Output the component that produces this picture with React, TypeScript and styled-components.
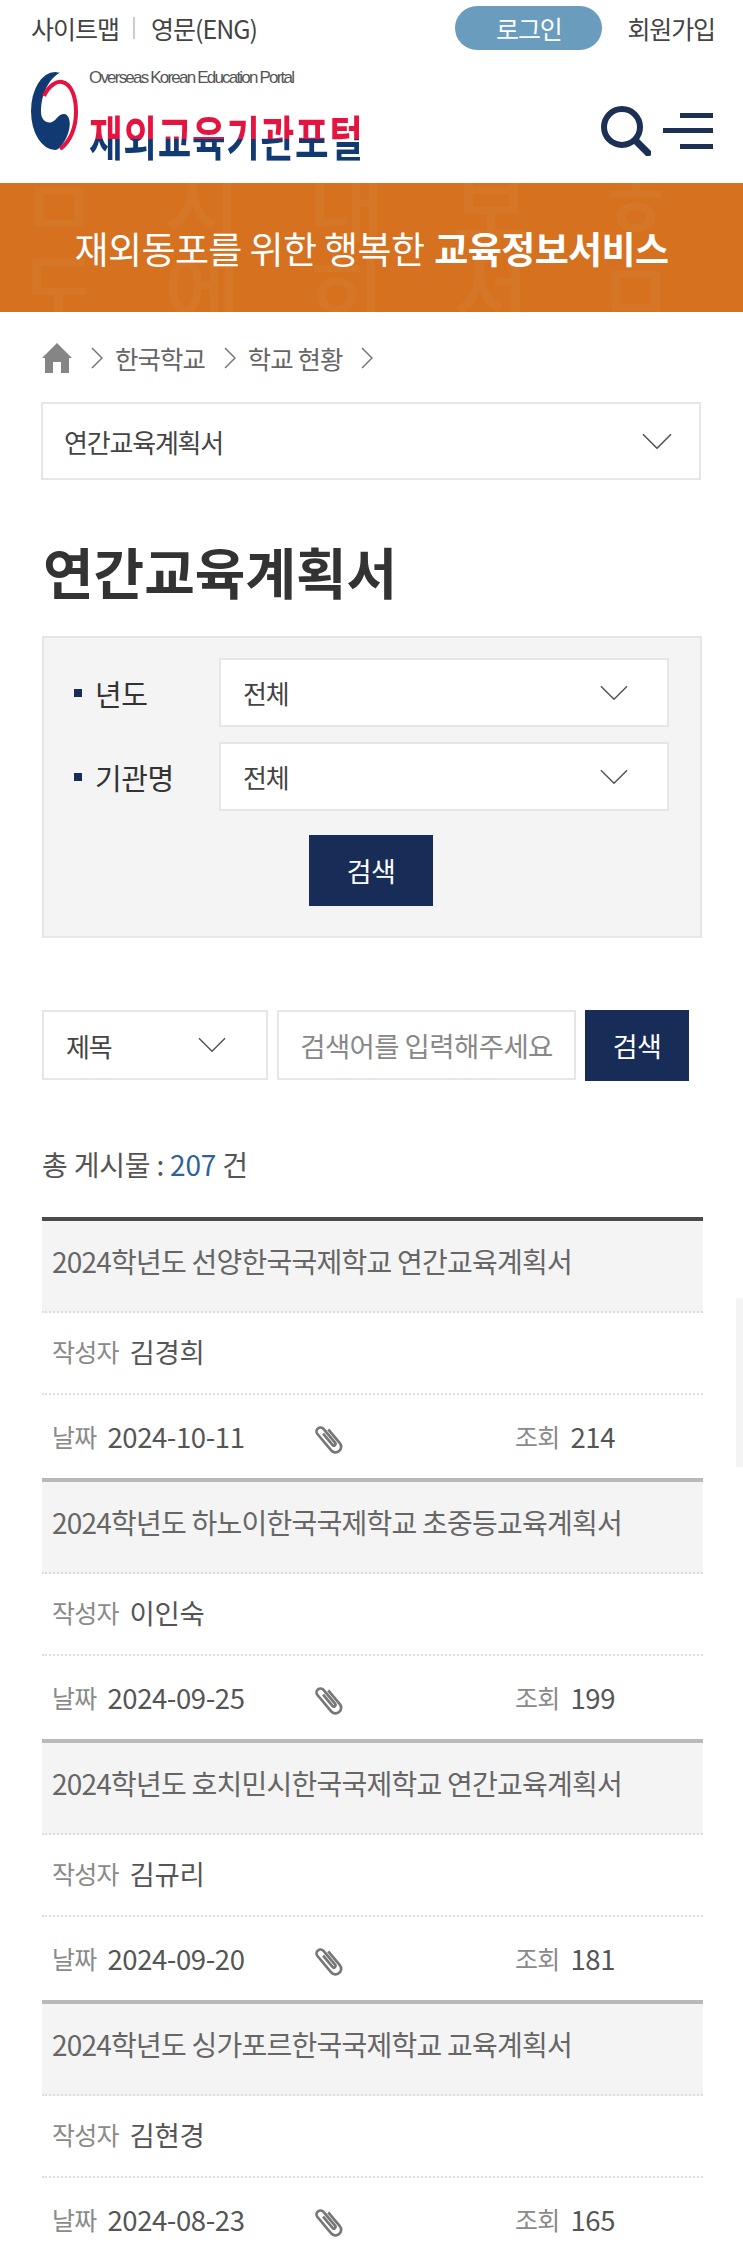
import styled, { createGlobalStyle } from "styled-components";

const GlobalStyle = createGlobalStyle`
  html, body {
    margin: 0;
    padding: 0;
    background: #fff;
    font-family: "Noto Sans CJK KR", "Noto Sans", sans-serif;
    color: #333;
  }
  * { box-sizing: border-box; }
`;

const Page = styled.div`
  width: 743px;
  height: 2264px;
  overflow: hidden;
  position: relative;
`;

const TopBar = styled.div`
  height: 56px;
  padding: 6px 28px 0 31px;
  display: flex;
  align-items: flex-start;
  justify-content: space-between;
`;

const UtilLinks = styled.div`
  display: flex;
  align-items: center;
  height: 44px;
  font-size: 25px;
  letter-spacing: -1px;
  color: #444;
`;

const Divider = styled.span`
  width: 2px;
  height: 22px;
  background: #ccc;
  margin: 0 16px 0 14px;
`;

const AuthLinks = styled.div`
  display: flex;
  align-items: center;
  gap: 25px;
  font-size: 25px;
  letter-spacing: -1.1px;
  color: #444;
`;

const LoginPill = styled.div`
  width: 147px;
  height: 44px;
  border-radius: 22px;
  background: #6a9cbe;
  color: #fff;
  display: flex;
  align-items: center;
  justify-content: center;
`;

const HeaderRow = styled.div`
  height: 127px;
  padding: 11px 30px 0 31px;
  display: flex;
  justify-content: space-between;
`;

const Logo = styled.div`
  display: flex;
  gap: 10px;
`;

const LogoText = styled.div`
  display: flex;
  flex-direction: column;
`;

const LogoCaption = styled.div`
  font-family: "Liberation Sans", sans-serif;
  font-size: 17px;
  line-height: 22px;
  letter-spacing: -1.8px;
  color: #555;
  white-space: nowrap;
`;

const LogoTitle = styled.div`
  font-size: 36.5px;
  line-height: 36px;
  font-weight: 700;
  letter-spacing: 0.75px;
  white-space: nowrap;
  transform: scaleY(1.35);
  transform-origin: top left;
  margin-top: 23px;
  background: linear-gradient(#e4133f 0 55%, #123a72 55% 100%);
  -webkit-background-clip: text;
  background-clip: text;
  color: transparent;
`;

const HeaderIcons = styled.div`
  display: flex;
  align-items: center;
  gap: 12px;
  height: 100px;
  padding-top: 28px;
`;

const Banner = styled.div`
  position: relative;
  height: 129px;
  background: #d5711f;
  overflow: hidden;
  display: flex;
  align-items: center;
  justify-content: center;
  font-size: 37px;
  letter-spacing: -0.6px;
  color: #fff;
  strong { font-weight: 700; margin-left: 10px; }
`;

const BannerTexture = styled.div`
  position: absolute;
  top: -22px;
  left: 20px;
  right: 20px;
  font-size: 84px;
  line-height: 84px;
  white-space: nowrap;
  letter-spacing: 24px;
  font-weight: 500;
  color: rgba(255, 255, 255, 0.045);
`;

const BannerLine = styled.span`
  position: relative;
`;

const Breadcrumb = styled.nav`
  height: 90px;
  padding: 1px 0 0 42px;
  display: flex;
  align-items: center;
  font-size: 25.5px;
  letter-spacing: -1px;
  color: #666;
`;

const Crumb = styled.span`
  display: flex;
  margin: 0 12px 0 19px;
`;

const Content = styled.div`
  padding: 0 41px;
`;

const Select = styled.div<{ $w?: string; $h: number; $pad: number; $right: number; $size: number }>`
  width: ${(p) => p.$w || "100%"};
  height: ${(p) => p.$h}px;
  background: #fff;
  border: 2px solid #e6e6e8;
  padding: 0 ${(p) => p.$right}px 0 ${(p) => p.$pad}px;
  display: flex;
  align-items: center;
  justify-content: space-between;
  font-size: ${(p) => p.$size}px;
  letter-spacing: -1.2px;
  color: #444;
  flex-shrink: 0;
`;

const Title = styled.h1`
  margin: 54px 0 30px 2px;
  font-size: 55px;
  line-height: 72px;
  font-weight: 700;
  letter-spacing: 0;
  color: #333;
`;

const FilterPanel = styled.div`
  margin-left: 1px;
  width: 660px;
  height: 302px;
  background: #f4f4f4;
  border: 2px solid #e6e6e6;
  padding: 20px 31px 0 30px;
`;

const FilterRow = styled.div`
  display: flex;
  align-items: center;
  margin-bottom: 15px;
`;

const FilterLabel = styled.div`
  width: 147px;
  display: flex;
  align-items: center;
  gap: 13px;
  font-size: 29px;
  letter-spacing: -0.4px;
  color: #333;
  &::before {
    content: "";
    width: 8px;
    height: 8px;
    background: #172c57;
  }
`;

const NavyButton = styled.div<{ $w: number; $h: number }>`
  width: ${(p) => p.$w}px;
  height: ${(p) => p.$h}px;
  background: #172c57;
  color: #fff;
  display: flex;
  align-items: center;
  justify-content: center;
  font-size: 27px;
  letter-spacing: -0.5px;
  flex-shrink: 0;
`;

const ButtonWrap = styled.div`
  display: flex;
  justify-content: center;
  margin-top: 24px;
  padding-right: 1px;
`;

const SearchRow = styled.div`
  margin: 72px 0 0 1px;
  display: flex;
  gap: 9px;
`;

const SearchInput = styled.div`
  width: 299px;
  height: 70px;
  border: 2px solid #e6e6e8;
  display: flex;
  align-items: center;
  justify-content: center;
  font-size: 27.5px;
  letter-spacing: -0.6px;
  color: #888;
  flex-shrink: 0;
  white-space: nowrap;
`;

const TotalCount = styled.div`
  margin: 59px 0 0 1px;
  height: 48px;
  line-height: 48px;
  font-size: 28px;
  letter-spacing: -0.2px;
  color: #555;
  b { font-weight: 400; color: #2e6299; }
`;

const BoardList = styled.div`
  margin: 29px 0 0 1px;
  width: 661px;
`;

const BoardItem = styled.article<{ $first?: boolean }>`
  height: 261px;
  border-top: 4px solid ${(p) => (p.$first ? "#4b4b4b" : "#b9b9b9")};
`;

const ItemTitle = styled.div`
  height: 92px;
  padding: 20px 0 0 10px;
  background: #f4f4f4;
  border-bottom: 2px dotted #ddd;
  font-size: 28px;
  line-height: 40px;
  letter-spacing: -0.77px;
  color: #666;
  white-space: nowrap;
`;

const ItemRow = styled.div`
  height: 82px;
  padding: 0 10px;
  display: flex;
  align-items: center;
  border-bottom: 2px dotted #ddd;
  font-size: 27.5px;
  letter-spacing: -0.4px;
  color: #555;
  &:last-child { border-bottom: 0; }
`;

const AuthorRow = styled(ItemRow)`
  padding-bottom: 4px;
`;

const FieldName = styled.span`
  font-size: 25px;
  letter-spacing: -0.8px;
  color: #8a8a8a;
  margin-right: 11px;
`;

const DateCell = styled.div`
  width: 263px;
  display: flex;
  align-items: center;
`;

const ClipCell = styled.div`
  width: 200px;
  height: 38px;
  margin-left: -2px;
  margin-right: 2px;
  padding-top: 4px;
`;

const ScrollThumb = styled.div`
  position: absolute;
  top: 1298px;
  right: 0;
  width: 7px;
  height: 169px;
  background: #f4f4f4;
`;

const posts = [
  { title: "2024학년도 선양한국국제학교 연간교육계획서", author: "김경희", date: "2024-10-11", views: 214 },
  { title: "2024학년도 하노이한국국제학교 초중등교육계획서", author: "이인숙", date: "2024-09-25", views: 199 },
  { title: "2024학년도 호치민시한국국제학교 연간교육계획서", author: "김규리", date: "2024-09-20", views: 181 },
  { title: "2024학년도 싱가포르한국국제학교 교육계획서", author: "김현경", date: "2024-08-23", views: 165 },
];

function Chevron({ size }: { size: number }) {
  return (
    <svg width={size} height={size * 0.55} viewBox="0 0 30 16" fill="none" stroke="#555" strokeWidth="1.6">
      <path d="M1 1l14 14L29 1" />
    </svg>
  );
}

function CrumbArrow() {
  return (
    <svg width="12" height="22" viewBox="0 0 12 22" fill="none" stroke="#777" strokeWidth="1.5">
      <path d="M1 1l10 10L1 21" />
    </svg>
  );
}

function Taegeuk() {
  return (
    <svg width="48" height="78" viewBox="0 0 48 78" style={{ marginTop: 5, flexShrink: 0 }}>
      <ellipse cx="24" cy="39" rx="24" ry="39" fill="#123a72" />
      <path
        d="M10 40C10 48 16 52 21 50C26 48 27 42 33 42C38 42 40 50 38 58C36 66 32 73 26 78H48V0H30C18 6 10 22 10 40z"
        fill="#fff"
      />
      <path
        d="M13 24C18 13 26 9 31 10C41 12 45 26 45 40C45 56 39 70 29 77"
        fill="none"
        stroke="#e4133f"
        strokeWidth="4"
      />
    </svg>
  );
}

function SearchGlass() {
  return (
    <svg width="50" height="50" viewBox="0 0 50 50" fill="none" stroke="#1c2f55" strokeLinecap="round">
      <circle cx="21" cy="21" r="18" strokeWidth="6" />
      <path d="M35 35l12 12" strokeWidth="7" />
    </svg>
  );
}

function Hamburger() {
  return (
    <svg width="50" height="36" viewBox="0 0 50 36" fill="#1c2f55">
      <rect x="17" y="0" width="33" height="5" />
      <rect x="0" y="15" width="50" height="5" />
      <rect x="17" y="31" width="33" height="5" />
    </svg>
  );
}

function Home() {
  return (
    <svg width="30" height="30" viewBox="0 0 30 30" fill="#858585">
      <path d="M15 0L30 15h-3v15h-8V19h-8v11H3V15H0z" />
    </svg>
  );
}

function Clip() {
  return (
    <svg width="32" height="36" viewBox="0 0 28 32" fill="none" stroke="#777" strokeWidth="2.4" style={{ transform: "rotate(-40deg)" }}>
      <path d="M19 9V25a5 5 0 0 1-10 0V6a3.500 3.500 0 0 1 7 0V22a1.500 1.500 0 0 1-3 0V9" />
    </svg>
  );
}

export default function App() {
  return (
    <Page>
      <GlobalStyle />
      <TopBar>
        <UtilLinks>
          사이트맵
          <Divider />
          영문(ENG)
        </UtilLinks>
        <AuthLinks>
          <LoginPill>로그인</LoginPill>
          회원가입
        </AuthLinks>
      </TopBar>
      <HeaderRow>
        <Logo>
          <Taegeuk />
          <LogoText>
            <LogoCaption>Overseas Korean Education Portal</LogoCaption>
            <LogoTitle>재외교육기관포털</LogoTitle>
          </LogoText>
        </Logo>
        <HeaderIcons>
          <SearchGlass />
          <Hamburger />
        </HeaderIcons>
      </HeaderRow>
      <Banner>
        <BannerTexture aria-hidden="true">
          ㅁ 시 내 보 ㅎ 이 므
          <br />
          도 에 히 서 ㅁ ㅅ
        </BannerTexture>
        <BannerLine>
          재외동포를 위한 행복한<strong>교육정보서비스</strong>
        </BannerLine>
      </Banner>
      <Breadcrumb>
        <Home />
        <Crumb>
          <CrumbArrow />
        </Crumb>
        한국학교
        <Crumb>
          <CrumbArrow />
        </Crumb>
        학교 현황
        <Crumb>
          <CrumbArrow />
        </Crumb>
      </Breadcrumb>
      <Content>
        <Select $w="660px" $h={78} $pad={21} $right={27} $size={26}>
          연간교육계획서
          <Chevron size={30} />
        </Select>
        <Title>연간교육계획서</Title>
        <FilterPanel>
          <FilterRow>
            <FilterLabel>년도</FilterLabel>
            <Select $w="450px" $h={69} $pad={22} $right={39} $size={26}>
              전체
              <Chevron size={28} />
            </Select>
          </FilterRow>
          <FilterRow>
            <FilterLabel>기관명</FilterLabel>
            <Select $w="450px" $h={69} $pad={22} $right={39} $size={26}>
              전체
              <Chevron size={28} />
            </Select>
          </FilterRow>
          <ButtonWrap>
            <NavyButton $w={124} $h={71}>검색</NavyButton>
          </ButtonWrap>
        </FilterPanel>
        <SearchRow>
          <Select $w="226px" $h={70} $pad={22} $right={40} $size={26}>
            제목
            <Chevron size={28} />
          </Select>
          <SearchInput>검색어를 입력해주세요</SearchInput>
          <NavyButton $w={104} $h={71}>검색</NavyButton>
        </SearchRow>
        <TotalCount>
          총 게시물 : <b>207</b> 건
        </TotalCount>
        <BoardList>
          {posts.map((post, idx) => (
            <BoardItem key={post.title} $first={idx === 0}>
              <ItemTitle>{post.title}</ItemTitle>
              <AuthorRow>
                <FieldName>작성자</FieldName>
                {post.author}
              </AuthorRow>
              <ItemRow>
                <DateCell>
                  <FieldName>날짜</FieldName>
                  {post.date}
                </DateCell>
                <ClipCell>
                  <Clip />
                </ClipCell>
                <FieldName>조회</FieldName>
                {post.views}
              </ItemRow>
            </BoardItem>
          ))}
        </BoardList>
      </Content>
      <ScrollThumb />
    </Page>
  );
}
